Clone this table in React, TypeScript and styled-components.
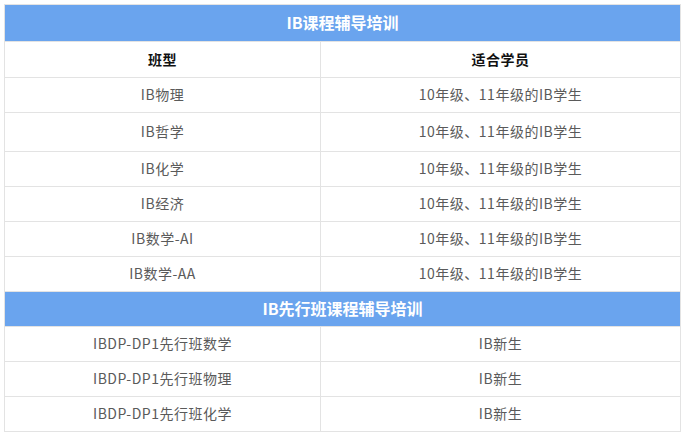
import { Fragment } from 'react'
import styled, { createGlobalStyle } from 'styled-components'

const GlobalStyle = createGlobalStyle`
  html, body {
    margin: 0;
    padding: 0;
    background: #ffffff;
  }
  body {
    font-family: "Noto Sans CJK SC", "Noto Sans", sans-serif;
  }
`

const Page = styled.div`
  padding: 4px 0 0 4px;
`

const Table = styled.div`
  display: grid;
  grid-template-columns: 316px 360px;
  width: 677px;
  border-top: 1px solid #e3e3e3;
  border-left: 1px solid #e3e3e3;
  box-sizing: border-box;
`

const TitleRow = styled.div<{ h: number }>`
  grid-column: 1 / span 2;
  height: ${({ h }) => h}px;
  box-sizing: border-box;
  display: flex;
  align-items: center;
  justify-content: center;
  padding-bottom: 2px;
  background: #6aa4ee;
  border-right: 1px solid #e3e3e3;
  border-bottom: 1px solid #e3e3e3;
  color: #ffffff;
  font-size: 16px;
  font-weight: bold;
`

const Cell = styled.div<{ h: number; head?: boolean }>`
  height: ${({ h }) => h}px;
  box-sizing: border-box;
  display: flex;
  align-items: center;
  justify-content: center;
  padding-bottom: 2px;
  border-right: 1px solid #e3e3e3;
  border-bottom: 1px solid #e3e3e3;
  font-size: 14px;
  letter-spacing: 0.5px;
  color: ${({ head }) => (head ? '#111111' : '#5a5a5a')};
  font-weight: ${({ head }) => (head ? 'bold' : 'normal')};
`

const courses: [string, string, number][] = [
  ['IB物理', '10年级、11年级的IB学生', 35],
  ['IB哲学', '10年级、11年级的IB学生', 39],
  ['IB化学', '10年级、11年级的IB学生', 35],
  ['IB经济', '10年级、11年级的IB学生', 35],
  ['IB数学-AI', '10年级、11年级的IB学生', 35],
  ['IB数学-AA', '10年级、11年级的IB学生', 35],
]

const preCourses: [string, string][] = [
  ['IBDP-DP1先行班数学', 'IB新生'],
  ['IBDP-DP1先行班物理', 'IB新生'],
  ['IBDP-DP1先行班化学', 'IB新生'],
]

export default function App() {
  return (
    <>
      <GlobalStyle />
      <Page>
        <Table>
          <TitleRow h={37}>IB课程辅导培训</TitleRow>
          <Cell h={36} head>班型</Cell>
          <Cell h={36} head>适合学员</Cell>
          {courses.map(([name, who, h]) => (
            <Fragment key={name}>
              <Cell h={h}>{name}</Cell>
              <Cell h={h}>{who}</Cell>
            </Fragment>
          ))}
          <TitleRow h={35}>IB先行班课程辅导培训</TitleRow>
          {preCourses.map(([name, who]) => (
            <Fragment key={name}>
              <Cell h={35}>{name}</Cell>
              <Cell h={35}>{who}</Cell>
            </Fragment>
          ))}
        </Table>
      </Page>
    </>
  )
}
